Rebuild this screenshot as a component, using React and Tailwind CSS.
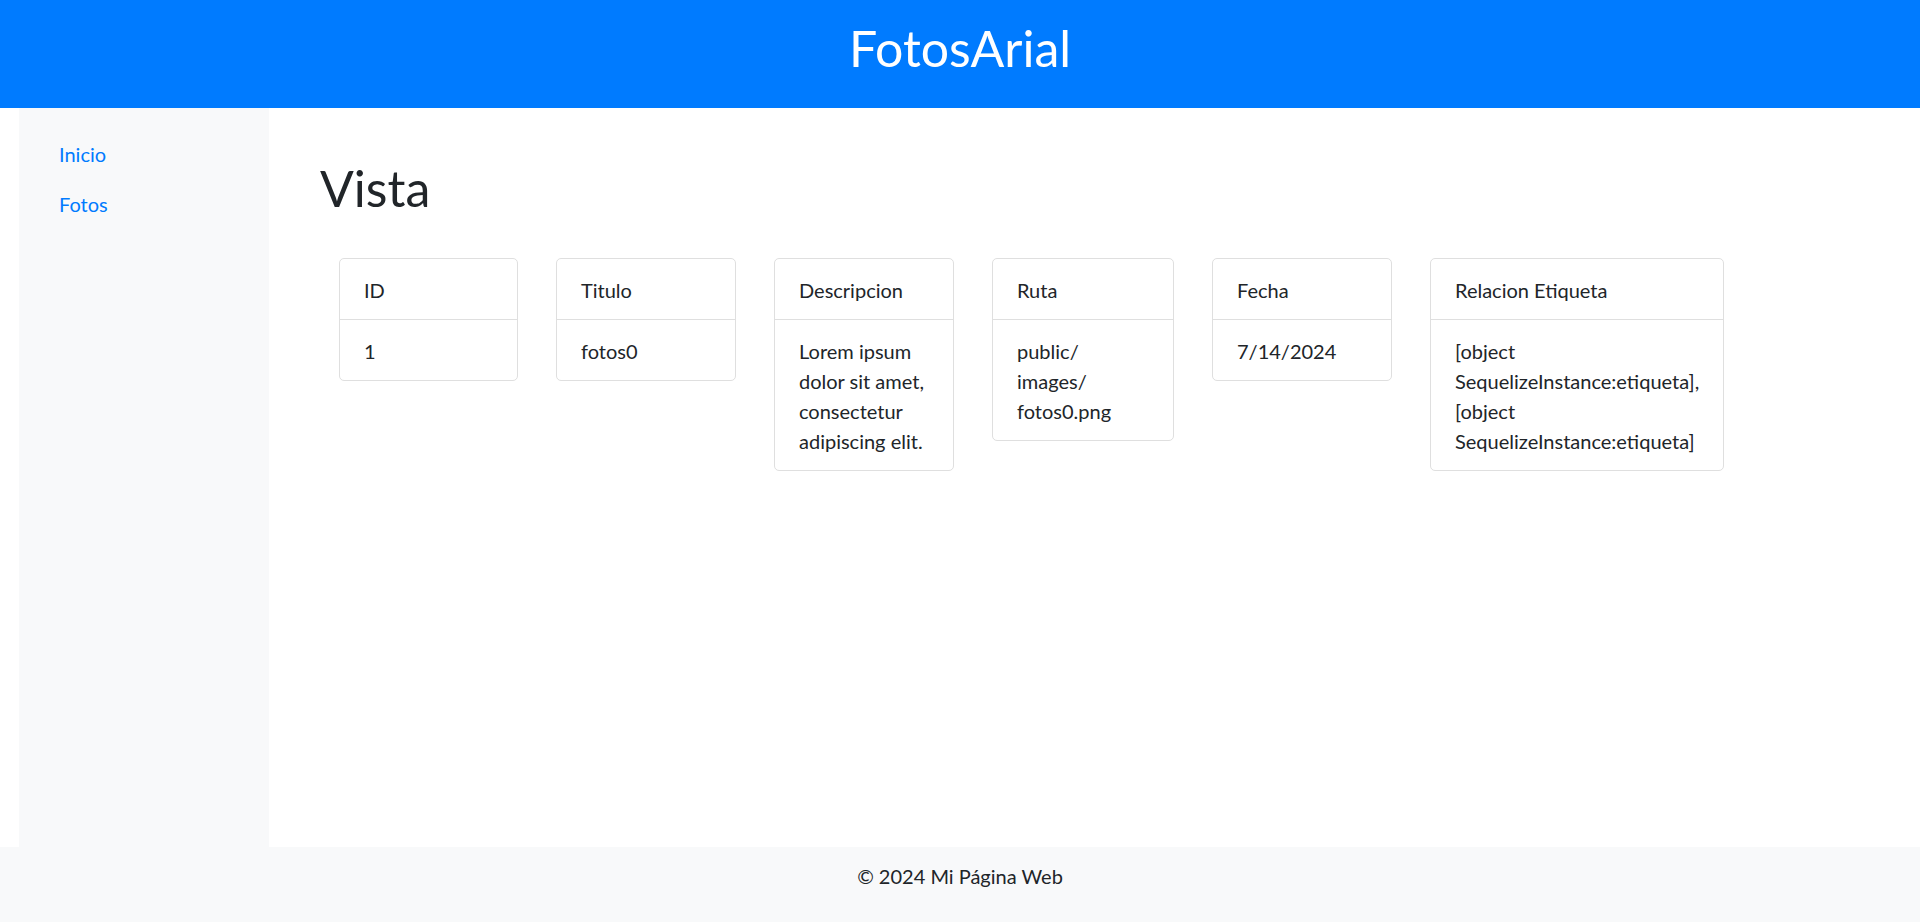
import React from 'react';

const campos = [
  { titulo: 'ID', valor: '1', ancho: 'w-[179px]' },
  { titulo: 'Titulo', valor: 'fotos0', ancho: 'w-[180px]' },
  { titulo: 'Descripcion', valor: 'Lorem ipsum dolor sit amet, consectetur adipiscing elit.', ancho: 'w-[180px]' },
  {
    titulo: 'Ruta',
    valor: (
      <>
        public/<br />images/<br />fotos0.png
      </>
    ),
    ancho: 'w-[182px]',
  },
  { titulo: 'Fecha', valor: '7/14/2024', ancho: 'w-[180px]' },
  {
    titulo: 'Relacion Etiqueta',
    valor: '[object SequelizeInstance:etiqueta],[object SequelizeInstance:etiqueta]',
    ancho: 'w-[294px]',
  },
];

const Tarjeta = ({ titulo, valor, ancho }) => (
  <div className={`${ancho} shrink-0 border border-[#dfdfdf] rounded-[5px] bg-white`}>
    <div className="px-6 pt-[16px] pb-[14px] border-b border-[#dfdfdf] leading-[30px]">{titulo}</div>
    <div className="px-6 pt-[16px] pb-[14px] leading-[30px]">{valor}</div>
  </div>
);

const App = () => {
  return (
    <div className="h-screen flex flex-col bg-white text-[#212529] text-[20px] font-[Lato,sans-serif]">
      {/* cabecera */}
      <header className="h-[108px] shrink-0 bg-[#007bff] text-white text-center pt-[18px]">
        <h1 className="text-[50px] leading-[60px] font-normal">FotosArial</h1>
      </header>

      <div className="flex-1 flex pl-[19px]">
        {/* menu lateral */}
        <nav className="w-[250px] shrink-0 bg-[#f8f9fa] px-[20px] pt-[21px]">
          <a href="#" className="block px-[20px] py-[10px] leading-[30px] text-[#007bff]">Inicio</a>
          <a href="#" className="block px-[20px] py-[10px] leading-[30px] text-[#007bff]">Fotos</a>
        </nav>

        {/* contenido */}
        <main className="flex-1 pl-[51px] pt-[50px]">
          <h1 className="text-[50px] leading-[60px] font-normal">Vista</h1>
          <div className="flex items-start gap-[38px] ml-[19px] mt-[40px]">
            {campos.map((c) => (
              <Tarjeta key={c.titulo} {...c} />
            ))}
          </div>
        </main>
      </div>

      <footer className="h-[75px] shrink-0 bg-[#f8f9fa] text-center pt-[14px] leading-[30px]">
        © 2024 Mi Página Web
      </footer>
    </div>
  );
};

export default App;
